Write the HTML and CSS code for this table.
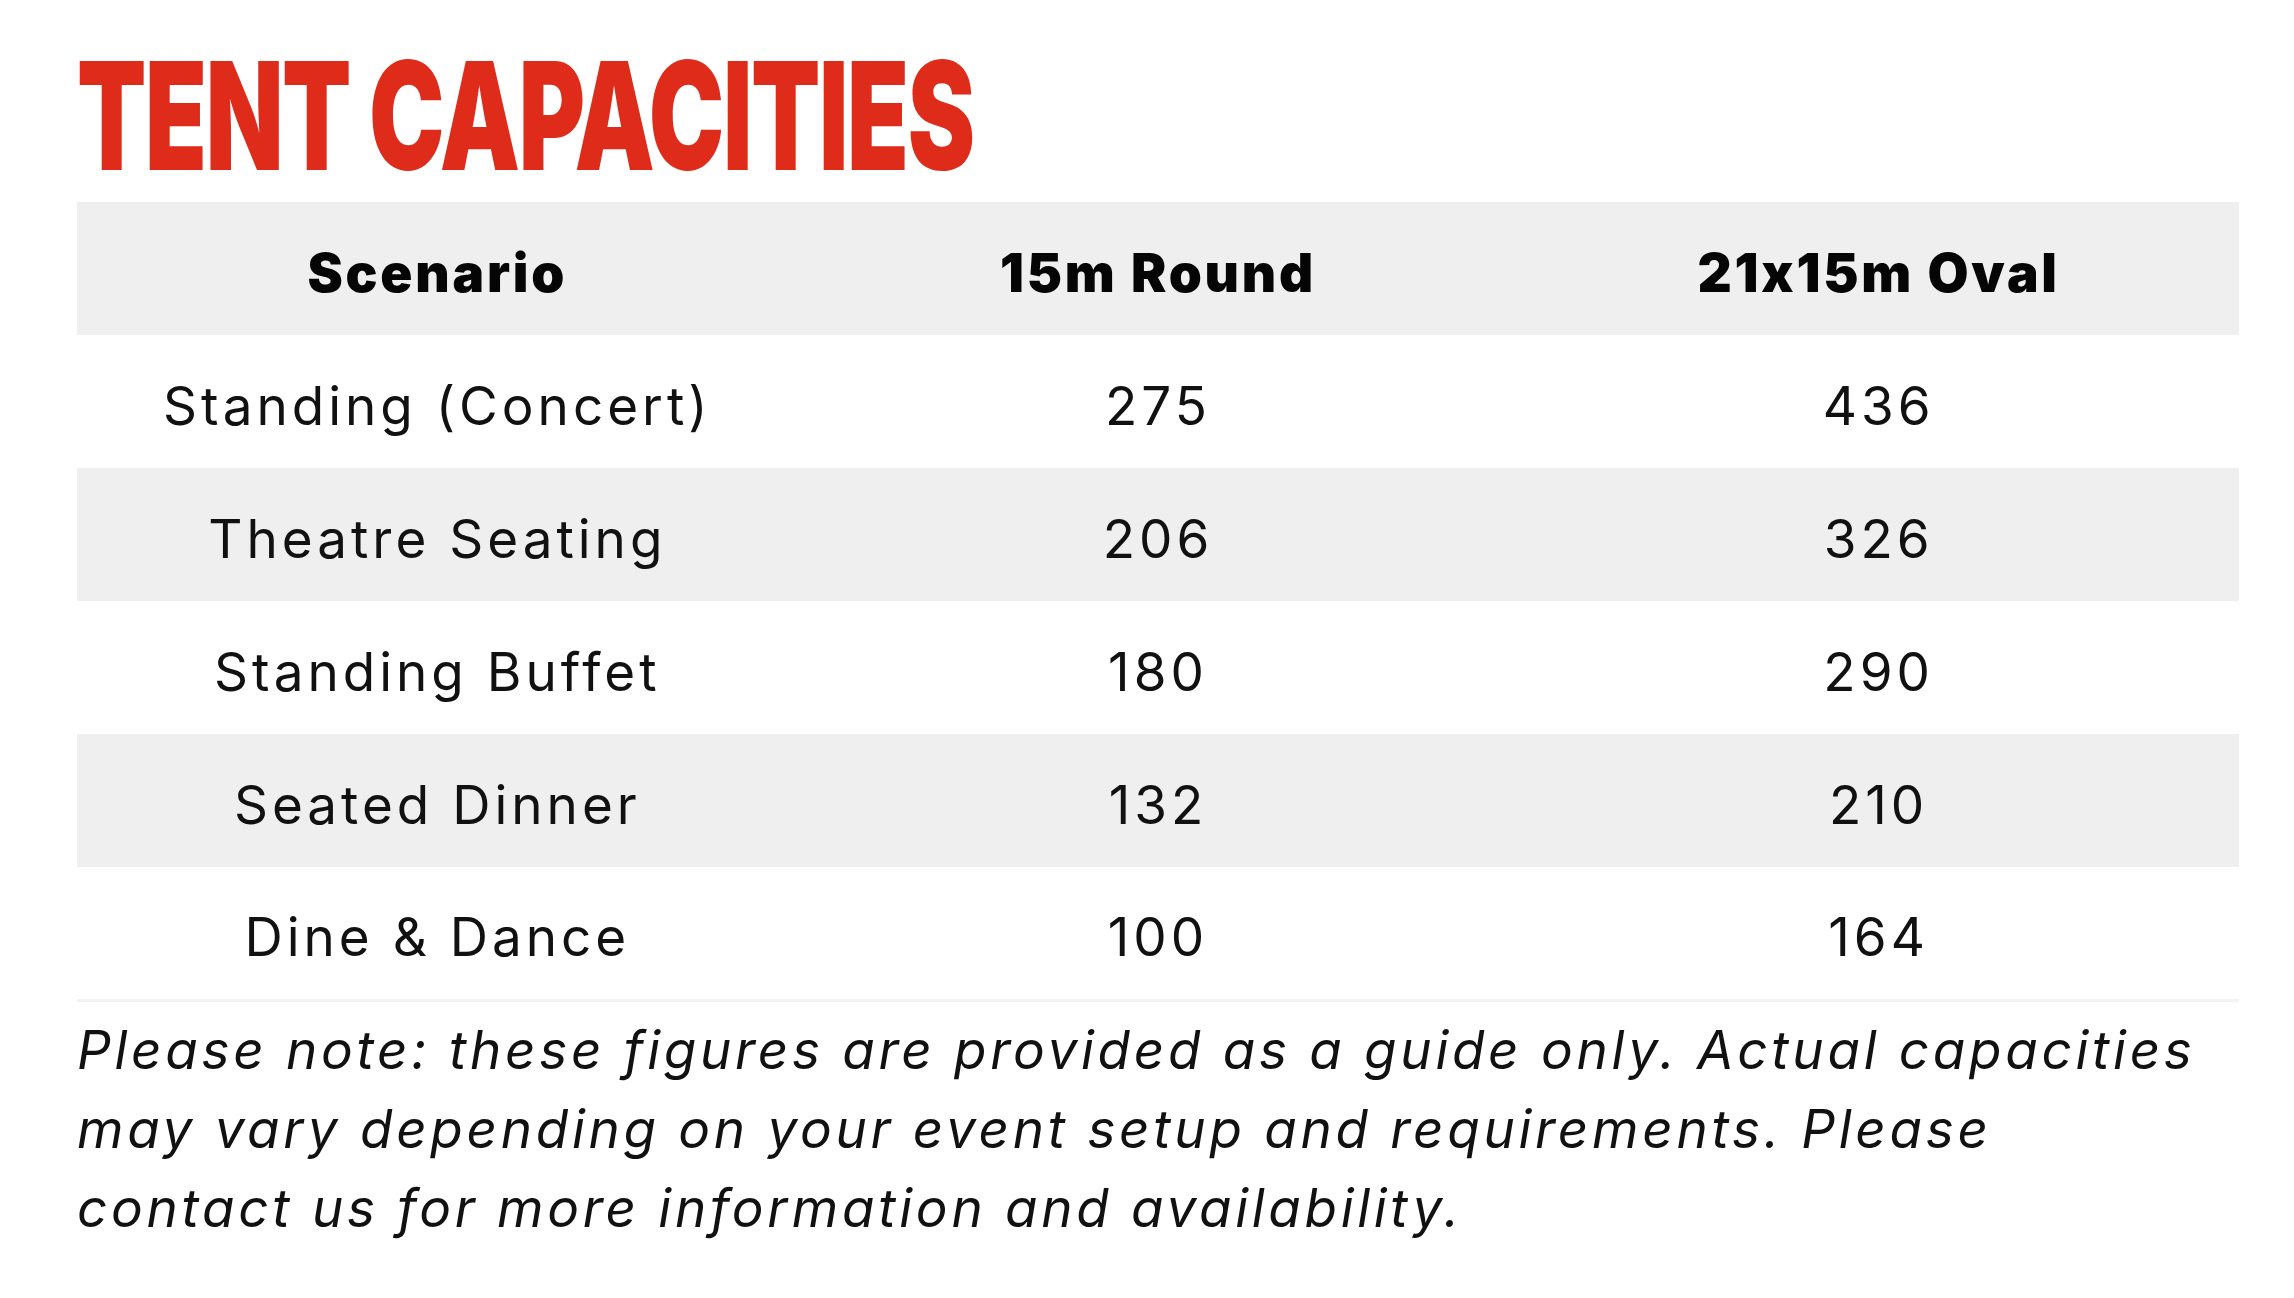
FILE: index.html
```html
<!DOCTYPE html>
<html lang="en">
<head>
<meta charset="utf-8">
<title>Tent Capacities</title>
<link rel="stylesheet" href="styles.css">
</head>
<body>
<main class="page">
  <h1 class="title"><span class="title-text">TENT CAPACITIES</span></h1>
  <table class="capacity-table">
    <thead>
      <tr>
        <th>Scenario</th>
        <th>15m Round</th>
        <th>21x15m Oval</th>
      </tr>
    </thead>
    <tbody>
      <tr><td>Standing (Concert)</td><td>275</td><td>436</td></tr>
      <tr><td>Theatre Seating</td><td>206</td><td>326</td></tr>
      <tr><td>Standing Buffet</td><td>180</td><td>290</td></tr>
      <tr><td>Seated Dinner</td><td>132</td><td>210</td></tr>
      <tr><td>Dine &amp; Dance</td><td>100</td><td>164</td></tr>
    </tbody>
  </table>
  <p class="note">Please note: these figures are provided as a guide only. Actual capacities may vary depending on your event setup and requirements. Please contact us for more information and availability.</p>
</main>
</body>
</html>
```
FILE: styles.css
```css
html, body {
  margin: 0;
  padding: 0;
  background: #ffffff;
}

body {
  font-family: "Inter", "Liberation Sans", sans-serif;
  font-feature-settings: "calt" 0;
  color: #111111;
}

.page {
  padding: 42px 0 0 77px;
  width: 2162px;
}

.title {
  margin: 0 0 12px 0;
  font-size: 150px;
  line-height: 148px;
  font-weight: 900;
  color: #df2b1a;
  white-space: nowrap;
  height: 148px;
}

.title-text {
  display: inline-block;
  transform: scaleX(0.674);
  transform-origin: left center;
  letter-spacing: -2px;
}

.capacity-table {
  width: 2162px;
  border-collapse: collapse;
  table-layout: fixed;
  border-bottom: 3px solid #f3f3f3;
}

.capacity-table th,
.capacity-table td {
  width: 33.333%;
  height: 133px;
  padding: 8px 0 0 0;
  text-align: center;
  vertical-align: middle;
  box-sizing: border-box;
}

.capacity-table th {
  font-size: 53px;
  font-weight: 900;
  letter-spacing: 2.8px;
  color: #050505;
  background: #efefef;
}

.capacity-table td {
  font-size: 53px;
  font-weight: 400;
  letter-spacing: 4px;
  color: #111111;
}

.capacity-table tbody tr:nth-child(even) td {
  background: #efefef;
}

.note {
  margin: 9px 0 0 0;
  max-width: 2135px;
  font-size: 53px;
  line-height: 79px;
  font-style: italic;
  letter-spacing: 3.7px;
  color: #111111;
}
```
